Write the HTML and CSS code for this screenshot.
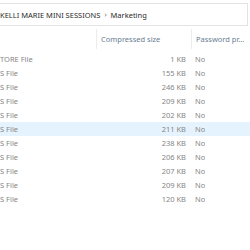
FILE: index.html
```html
<!DOCTYPE html>
<html lang="en">
<head>
  <meta charset="UTF-8">
  <title>Marketing</title>
  <link rel="stylesheet" href="styles.css">
</head>
<body>
  <div class="address-bar">
    <span class="crumb">KELLI MARIE MINI SESSIONS</span>
    <span class="chevron">›</span>
    <span class="crumb">Marketing</span>
  </div>

  <div class="file-list">
    <div class="header row">
      <div class="col type"></div>
      <div class="col size">Compressed size</div>
      <div class="col pass">Password pr...</div>
    </div>

    <div class="row"><div class="col type">TORE File</div><div class="col size">1 KB</div><div class="col pass">No</div></div>
    <div class="row"><div class="col type">S File</div><div class="col size">155 KB</div><div class="col pass">No</div></div>
    <div class="row"><div class="col type">S File</div><div class="col size">246 KB</div><div class="col pass">No</div></div>
    <div class="row"><div class="col type">S File</div><div class="col size">209 KB</div><div class="col pass">No</div></div>
    <div class="row"><div class="col type">S File</div><div class="col size">202 KB</div><div class="col pass">No</div></div>
    <div class="row hover"><div class="col type">S File</div><div class="col size">211 KB</div><div class="col pass">No</div></div>
    <div class="row"><div class="col type">S File</div><div class="col size">238 KB</div><div class="col pass">No</div></div>
    <div class="row"><div class="col type">S File</div><div class="col size">206 KB</div><div class="col pass">No</div></div>
    <div class="row"><div class="col type">S File</div><div class="col size">207 KB</div><div class="col pass">No</div></div>
    <div class="row"><div class="col type">S File</div><div class="col size">209 KB</div><div class="col pass">No</div></div>
    <div class="row"><div class="col type">S File</div><div class="col size">120 KB</div><div class="col pass">No</div></div>
  </div>
</body>
</html>
```

FILE: styles.css
```css
body {
  margin: 0;
  background: #ffffff;
  font-family: "Noto Sans", "Open Sans", sans-serif;
  font-size: 7.5px;
  overflow: hidden;
}

.address-bar {
  display: flex;
  align-items: center;
  gap: 4px;
  margin-top: 3px;
  margin-right: 2px;
  height: 21px;
  border: 1px solid #e3e3e3;
  border-left: none;
  color: #2b2b2b;
}

.chevron {
  color: #6a6a6a;
  font-size: 7px;
}

.file-list {
  margin-top: 3px;
}

.row {
  display: flex;
  height: 14px;
  align-items: center;
  color: #858585;
}

.row.hover {
  background: #e5f3ff;
}

.header {
  height: 20px;
  margin-bottom: 3px;
  color: #6b7d95;
}

.col {
  white-space: nowrap;
  overflow: hidden;
}

.type {
  width: 96px;
}

.size {
  width: 90px;
  text-align: right;
}

.pass {
  padding-left: 9px;
}

.header .col {
  height: 20px;
  line-height: 20px;
}

.header .size {
  border-left: 1px solid #ececec;
  text-align: left;
  padding-left: 4px;
  width: 90px;
}

.header .pass {
  border-left: 1px solid #ececec;
  padding-left: 4px;
}
```
